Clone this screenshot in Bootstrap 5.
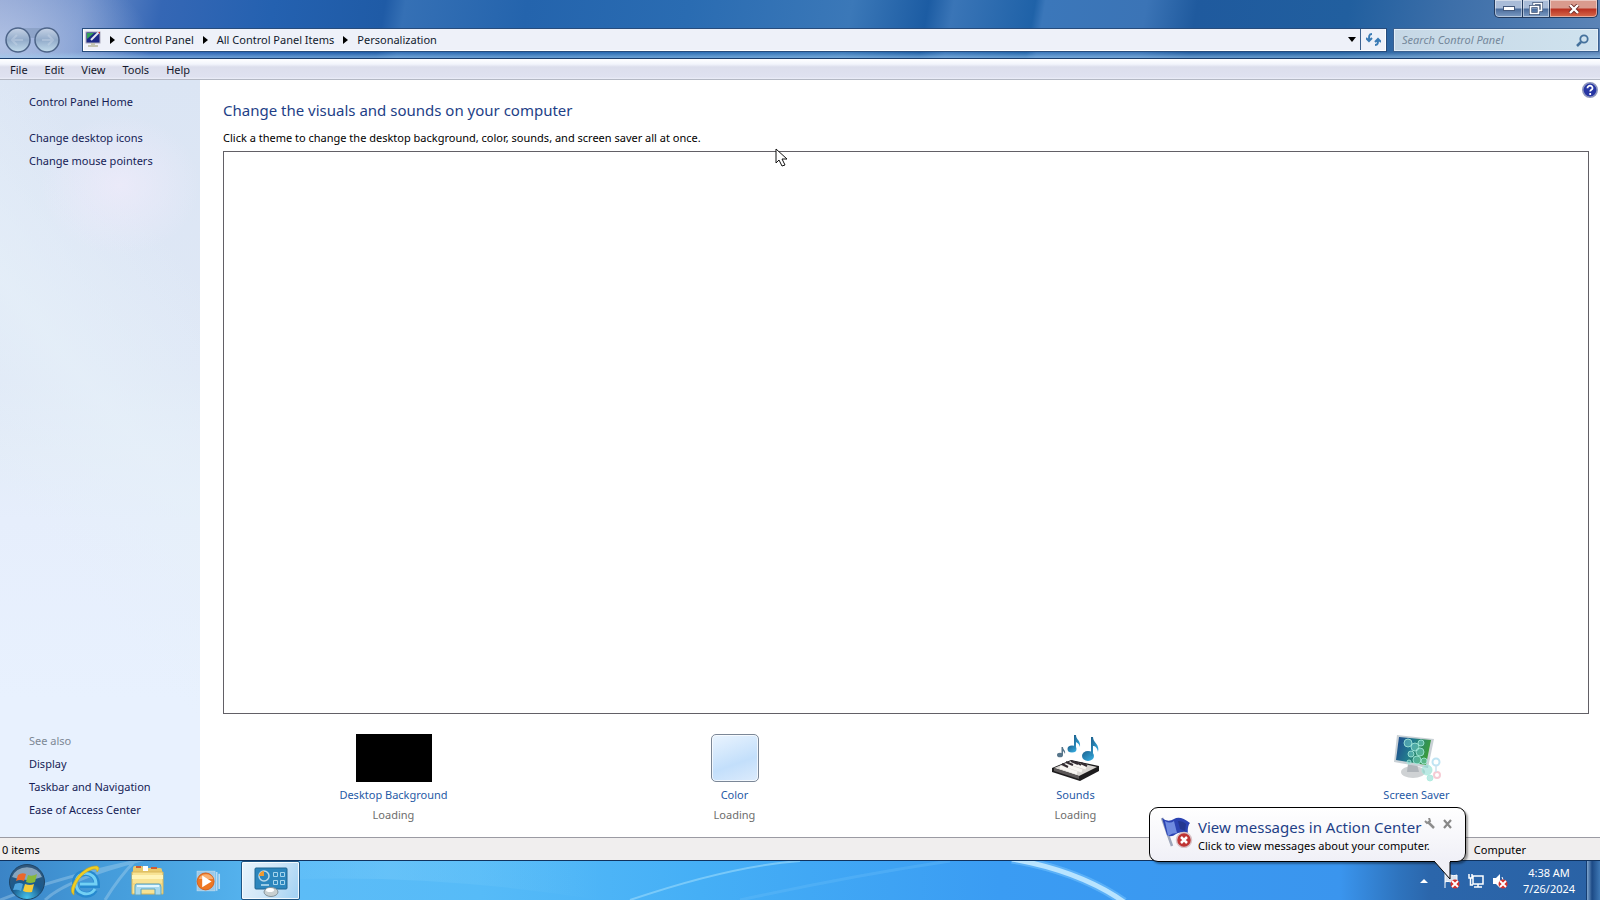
<!DOCTYPE html>
<html lang="en">
<head>
<meta charset="utf-8">
<meta name="viewport" content="width=device-width, initial-scale=1">
<title>Personalization</title>
<link rel="stylesheet" href="https://cdn.jsdelivr.net/npm/bootstrap@5.3.0/dist/css/bootstrap.min.css">
<script src="https://cdn.jsdelivr.net/npm/bootstrap@5.3.0/dist/js/bootstrap.bundle.min.js"></script>
<style>
body{font:11px/16px "Noto Sans","Open Sans",sans-serif;color:#000;background:#fff;overflow:hidden}
a{text-decoration:none}
button{border:0;background:none;padding:0;color:inherit}
svg{display:block;flex:none}
.frame{height:59px;border-bottom:1px solid #1c3f6e;
 background:
 linear-gradient(180deg,rgba(255,255,255,0) 52px,rgba(160,205,240,.5) 57px),
 radial-gradient(ellipse 150px 90px at 0 45px,rgba(190,205,235,.75),rgba(190,205,235,0)),
 linear-gradient(100deg,#8a9fcf 0,#6f8fca 80px,#3567b5 160px,#2461b0 270px,#1f5ba6 380px,#3570b5 400px,#2464ad 520px,#2a6cb2 680px,#3b78b8 840px,#1c5ca3 915px,#3a75b7 940px,#1f62a8 1020px,#3b77ba 1030px,#3b74b6 1130px,#1f5a9e 1180px,#215f9f 1330px,#3d6fa9 1430px,#5f86b8 1600px)}
.capbtns{height:18px;margin-right:2px}
.capbtns button{height:18px;border:1px solid #223a5e;border-top:0;border-left:0;display:flex;align-items:center;justify-content:center;background:linear-gradient(#a9bcd8 0 8px,#4a6c9c 9px,#7d9cc4);box-shadow:inset 0 0 0 1px rgba(255,255,255,.45)}
.capbtns button:first-child{width:29px;border-left:1px solid #223a5e;border-radius:0 0 0 5px}
.capbtns button:nth-child(2){width:27px}
.capbtns .closebtn{width:48px;border-radius:0 0 5px 0;background:linear-gradient(#d99a8d 0 8px,#b93020 9px,#d86a4c)}
.navrow{padding:9px 2px 0 5px}
.addr{height:22px;background:#eef1f9;outline:1px solid #274c7c;border:1px solid #fff;border-top:0;margin-left:22px;padding-left:1px}
.addr a{color:#111a2c}
.addr .crumbs{gap:9px}
.addr .sepbtn{width:25px;height:21px;border-left:1px solid #3c618f;display:flex;align-items:center;justify-content:center}
.searchbox{width:204px;height:22px;background:linear-gradient(90deg,#c6d8e6,#cfe2ee);border:1px solid #e3eef7;outline:1px solid #3a608f;margin-left:8px}
.searchbox input{border:0;background:none;outline:0;font-style:italic;padding:0 0 0 7px;min-width:0;color:#44566c}
.searchbox input::placeholder{color:#75889b;opacity:1}
.menus{height:21px;background:linear-gradient(#fff 0,#f3f5fc 5px,#dcdeec 8px,#dfe1f0 18px,#eceef8);border-bottom:1px solid #b4b8c4;padding:2px 0 0 10px;gap:17px;color:#15182c}
.side{width:200px;padding:10px 0 16px 29px;
 background:
 radial-gradient(ellipse 80px 70px at 120px 105px,rgba(238,235,250,.8),rgba(238,235,250,0)),
 linear-gradient(50deg,rgba(230,241,250,0) 35%,rgba(230,240,249,.7) 56%,rgba(226,236,248,0) 80%),
 linear-gradient(180deg,#dbe5f4 0,#dfe8f6 300px,#e3ecf8 370px,#e6eefc 440px,#e8f1fe 620px,#e8f1fe)}
.side a{color:#151c55;line-height:23px;display:block}
.side .home{margin-bottom:13px}
.also{color:#7d8895;line-height:23px}
.mainpane{padding:19px 11px 14px 23px}
.mainpane h1{font-size:15px;line-height:22px;color:#1e3f87;margin:0 0 9px;font-weight:400}
.themes{border:1px solid #626066;margin-top:5px}
.opts{padding-top:20px;margin-right:2px}
.opts a{color:#1f5aa6;line-height:16px}
.opts .state{color:#6d6d6d;line-height:16px;margin-top:4px}
.opts .pic{height:48px;margin-bottom:5px}
.blackpic{width:76px;height:48px;background:#000}
.colorpic{width:48px;height:48px;border:1px solid #7b8797;border-radius:5px;background:linear-gradient(160deg,#eaf4fe,#c3dffb 60%,#dcebfc);box-shadow:inset 0 0 0 1px rgba(255,255,255,.7)}
.helpbtn{position:absolute;right:2px;top:2px}
.status{height:23px;background:#f0eeee;border-top:1px solid #9b9ba3;padding:2px 0 0 2px}
.status .zone{margin-right:74px}
.tasks{height:40px;border-top:1px solid #10325e;position:relative;
 background:linear-gradient(90deg,#3b84c6 0,#4399d8 90px,#4eaae6 200px,#5cbcf7 300px,#56bbf8 480px,#45aff6 700px,#3a9cf3 1000px,#3a95ee 1340px,#2e73bd 1400px,#2b66ab 1430px,#2a62a5)}
.tasks .swoosh{position:absolute;left:0;top:0}
.tasks button{position:relative}
.pinned{gap:25px}
.activebtn{width:59px;height:39px;border:1px solid #1f5684;border-radius:2px;display:flex;align-items:center;justify-content:center;background:linear-gradient(115deg,#e9f4fc,#cfe6f8 50%,#9fd0f3);box-shadow:inset 0 0 0 1px rgba(255,255,255,.8)}
.clockbtn{color:#fff;line-height:16px;width:74px}
.peek{width:14px;height:39px;border-left:1px solid #163e72;background:linear-gradient(90deg,#7fa6cf,#1c4a86 5px,#3e78b5)}
.balloon{position:absolute;right:134px;bottom:38px;width:317px;height:55px;border:1px solid #000;border-radius:9px;background:linear-gradient(#fff,#f0f0f7);padding:8px 10px 0 10px;z-index:5;box-shadow:2px 2px 2px rgba(0,0,0,.35)}
.balloon .tail{position:absolute;right:10px;top:52px}
.balloon h2{font-size:15px;line-height:22px;color:#1e3f87;margin:0;font-weight:400;white-space:nowrap}
.balloon p{margin:0;line-height:16px;white-space:nowrap}
.balloon .tools{position:absolute;right:13px;top:10px;gap:8px}
.pointer{position:absolute;left:775px;top:148px;z-index:6}
</style>
</head>
<body>
<div class="d-flex flex-column vh-100 position-relative">

<header class="frame flex-shrink-0">
 <div class="capbtns d-flex justify-content-end">
  <button aria-label="Minimize"><svg width="12" height="5"><rect x=".5" y=".5" width="11" height="4" fill="#fff" stroke="#44597c"/></svg></button>
  <button aria-label="Restore"><svg width="14" height="13" fill="none"><path d="M5 3V1.500h7.500v7H10M1.500 4.500h8v7h-8z" stroke="#33496d" stroke-width="3"/><path d="M5 3V1.500h7.500v7H10M1.500 4.500h8v7h-8z" stroke="#fff" stroke-width="1.700"/></svg></button>
  <button class="closebtn" aria-label="Close"><svg width="12" height="10"><path d="M2 1l8 8M10 1L2 9" stroke="#6b2a26" stroke-width="4"/><path d="M2 1l8 8M10 1L2 9" stroke="#fff" stroke-width="2.400"/></svg></button>
 </div>
 <div class="navrow d-flex align-items-center">
  <svg width="56" height="26" viewBox="0 0 56 26"><defs><linearGradient id="nb" x2="0" y2="1"><stop stop-color="#c6d3e6"/><stop offset=".5" stop-color="#92abca"/><stop offset="1" stop-color="#c3dcec"/></linearGradient></defs>
   <path d="M13 1h30v7q-15 6-30 0z" fill="#8197bb" opacity=".6"/><g fill="url(#nb)" stroke="#4d6488" stroke-width="1.500"><circle cx="13" cy="13" r="12"/><circle cx="42" cy="13" r="12"/></g><path d="M18 13H8m4-5l-5 5 5 5M37 13h10m-4-5l5 5-5 5" fill="none" stroke="#d5e0ee" stroke-width="2" opacity=".35"/></svg>
  <nav class="addr d-flex align-items-center flex-grow-1" aria-label="Address">
   <div class="crumbs d-flex align-items-center flex-grow-1">
    <svg width="16" height="17" viewBox="0 0 16 17"><rect x="1" y="1" width="14" height="11" fill="#1c2a86" stroke="#aab"/><path d="M2 2h7l-7 6z" fill="#35a456"/><path d="M6 9l8-8" stroke="#e8e8f4" stroke-width="2"/><path d="M13 1l2 0v2z" fill="#c33"/><path d="M6 12h4v2h3v2H3v-2h3z" fill="#c3c5b2"/></svg>
    <svg width="5" height="8"><path d="M0 0l5 4-5 4z"/></svg><a href="#">Control Panel</a>
    <svg width="5" height="8"><path d="M0 0l5 4-5 4z"/></svg><a href="#">All Control Panel Items</a>
    <svg width="5" height="8"><path d="M0 0l5 4-5 4z"/></svg><a href="#">Personalization</a>
   </div>
   <button class="me-1" aria-label="Previous locations"><svg width="8" height="5"><path d="M0 0h8L4 5z"/></svg></button>
   <button class="sepbtn" aria-label="Refresh"><svg width="15" height="14" viewBox="0 0 15 14" fill="none" stroke="#3a7bb5" stroke-width="2"><path d="M6 1C3 1 3 3 3 7M0 5l3 3 3-3M9 12c3 0 3-2 3-5M9 9l3-3 3 3"/></svg></button>
  </nav>
  <div class="searchbox d-flex align-items-center">
   <input class="flex-grow-1" type="text" placeholder="Search Control Panel" aria-label="Search Control Panel">
   <button class="me-2" aria-label="Search"><svg width="13" height="13" fill="none" stroke="#44719c"><circle cx="8" cy="5" r="3.700" stroke-width="1.800"/><path d="M5 8l-4 4" stroke-width="2.500"/></svg></button>
  </div>
 </div>
</header>

<nav class="menus d-flex align-items-center flex-shrink-0" aria-label="Menu">
 <button>File</button><button>Edit</button><button>View</button><button>Tools</button><button>Help</button>
</nav>

<div class="d-flex flex-grow-1">
 <aside class="side d-flex flex-column flex-shrink-0">
  <a class="home" href="#">Control Panel Home</a>
  <a href="#">Change desktop icons</a>
  <a href="#">Change mouse pointers</a>
  <div class="mt-auto also">See also</div>
  <a href="#">Display</a>
  <a href="#">Taskbar and Navigation</a>
  <a href="#">Ease of Access Center</a>
 </aside>
 <main class="mainpane d-flex flex-column flex-grow-1 position-relative">
  <button class="helpbtn" aria-label="Help"><svg width="16" height="16"><circle cx="8" cy="8" r="7.200" fill="#2736a4" stroke="#8e96bd" stroke-width="1.600"/><path d="M5.500 6.200c0-3.400 5.200-3.200 5 0 0 1.600-2.300 1.600-2.300 3.300M8.200 11v2" fill="none" stroke="#fff" stroke-width="1.800"/></svg></button>
  <h1>Change the visuals and sounds on your computer</h1>
  <div>Click a theme to change the desktop background, color, sounds, and screen saver all at once.</div>
  <div class="themes flex-grow-1"></div>
  <div class="opts row g-0 text-center">
   <div class="col-3 d-flex flex-column align-items-center"><div class="pic blackpic"></div><a href="#">Desktop Background</a><div class="state">Loading</div></div>
   <div class="col-3 d-flex flex-column align-items-center"><div class="pic colorpic"></div><a href="#">Color</a><div class="state">Loading</div></div>
   <div class="col-3 d-flex flex-column align-items-center">
    <svg class="pic" width="48" height="48" viewBox="0 0 48 48"><defs><linearGradient id="nt" x2="1" y2="1"><stop stop-color="#1b5f8c"/><stop offset="1" stop-color="#39b4e8"/></linearGradient></defs>
     <path d="M0 34l19-8 28 6v5L28 47 0 38z" fill="#1d1c1d"/><path d="M2 34l17-7 26 6-18 9z" fill="#d9d6d2"/><path d="M2 34l25 8v3L2 37z" fill="#5c5858"/><path d="M8 33l17 6M13 31l17 6M18 29l16 5" stroke="#f8f6f2" stroke-width="3"/><path d="M14 28l7 3M19 27l7 3M24 28l5 3M29 29l6 3M10 30l6 3" stroke="#332c31" stroke-width="2"/>
     <g fill="url(#nt)"><ellipse cx="20" cy="15" rx="4.500" ry="3.500"/><path d="M22 15V1h2c0 5 5 5 4 12-1-4-3-4-4-5v7z"/><ellipse cx="36" cy="22" rx="6" ry="5"/><path d="M39 22V3h2c0 6 7 7 5 15-1-5-3-6-5-6v10z"/></g><g fill="#56758a"><ellipse cx="8" cy="21" rx="3" ry="2.300"/><path d="M9.500 21v-8H11c0 3 3 3 2 7-1-2-1-2-2-3v4z"/></g></svg>
    <a href="#">Sounds</a><div class="state">Loading</div></div>
   <div class="col-3 d-flex flex-column align-items-center">
    <svg class="pic" width="48" height="48" viewBox="0 0 48 48"><defs><linearGradient id="sc" x2="1" y2=".3"><stop stop-color="#1f478e"/><stop offset=".5" stop-color="#227c8e"/><stop offset="1" stop-color="#3b9c3b"/></linearGradient></defs>
     <ellipse cx="20" cy="38" rx="12" ry="6" fill="#cfd2d4"/><path d="M15 30h9l2 8H14z" fill="#b0b5ba"/><path d="M4 1l37 4-6 29L1 28z" fill="#c9d1d6"/><path d="M6 3l32 3-5 25L3 26z" fill="url(#sc)"/>
     <g fill="#78d4ca" fill-opacity=".5" stroke="#a9ebdc" stroke-opacity=".8"><circle cx="15" cy="9" r="4"/><circle cx="22" cy="13" r="4"/><circle cx="28" cy="9" r="3"/><circle cx="27" cy="18" r="4"/><circle cx="18" cy="20" r="3"/><circle cx="24" cy="26" r="4"/><circle cx="31" cy="27" r="3"/><circle cx="16" cy="28" r="2"/><circle cx="34" cy="36" r="5"/><circle cx="37" cy="44" r="3"/></g><g fill="none"><circle cx="43" cy="28" r="3.500" stroke="#bfe4f3" stroke-width="2"/><circle cx="44" cy="41" r="3" stroke="#f6cbd4" stroke-width="2"/><path d="M43 31v7" stroke="#cbe2ee" stroke-width="1.500"/></g></svg>
    <a href="#">Screen Saver</a></div>
  </div>
 </main>
</div>

<footer class="status d-flex align-items-center justify-content-between flex-shrink-0">
 <span>0 items</span>
 <span class="zone">Computer</span>
</footer>

<div class="tasks d-flex align-items-center flex-shrink-0">
 <svg class="swoosh" width="1300" height="39" fill="none"><defs><linearGradient id="glow"><stop stop-color="#7bcdfa" stop-opacity="0"/><stop offset=".4" stop-color="#7bcdfa" stop-opacity=".35"/><stop offset="1" stop-color="#7bcdfa" stop-opacity="0"/></linearGradient></defs><path d="M45 39Q70 15 170-8M105 39Q120 15 135 0M0 39Q100 0 260-20" stroke="#b9dcf0" stroke-opacity=".35" stroke-width="3"/><path d="M250 20Q420 10 600 39V0H250z" fill="url(#glow)"/><path d="M630 39Q730 5 800 0" stroke="#8fd4fb" stroke-opacity=".7" stroke-width="2"/><path d="M740 39Q850 15 950 0" stroke="#68bdfa" stroke-opacity=".35" stroke-width="3"/><path d="M1012-2Q1080 10 1124 41" stroke="#6fc0fb" stroke-width="9" stroke-opacity=".6"/><path d="M1012-2Q1080 10 1124 41" stroke="#b8e4ff" stroke-width="5"/></svg>
 <div class="pinned d-flex align-items-center ms-2">
 <button aria-label="Start"><svg width="38" height="38" viewBox="0 0 38 38"><defs><radialGradient id="orb" cx=".5" cy=".95" r=".9"><stop stop-color="#47c3ec"/><stop offset=".5" stop-color="#195a8d"/><stop offset="1" stop-color="#31587c"/></radialGradient></defs><circle cx="19" cy="20" r="17.500" fill="url(#orb)" stroke="#1d4568"/><path d="M4 15a15.500 13 0 0 1 30 0q-15 6-30 0z" fill="#d3e4ee" opacity=".55"/><path d="M10 13q4-3 8-1l-2 7q-4-2-8 0z" fill="#ea672b"/><path d="M20 13q4 2 9-1l-2 8q-5 2-9 0z" fill="#87b93b"/><path d="M7 22q5-2 8 0l-2 7q-3-2-8-1z" fill="#50a5de"/><path d="M17 22q5 2 9 0l-2 8q-5 1-9-1z" fill="#f5cc3a"/></svg></button>
 <button aria-label="Internet Explorer"><svg width="32" height="34" viewBox="2 0 32 34"><path d="M26 26c-5 8-20 6-20-7 0-14 22-14 22 2H11" fill="none" stroke="#2689cf" stroke-width="6"/><path d="M26 25c-5 8-19 6-19-6 0-13 20-13 20 1H11" fill="none" stroke="#72d0f4" stroke-width="3"/><path d="M5 31C-4 27 12 1 28 2c3 1 2 4 0 6 0-3-2-4-6-2C12 9 4 22 5 31z" fill="#f0ce23" stroke="#c6a11b" stroke-width=".6"/></svg></button>
 <button aria-label="Windows Explorer"><svg width="40" height="34" viewBox="0 0 40 34"><path d="M5 4q0-2 2-2h7l2 2h16q2 0 2 2v5H5z" fill="#e8c96d"/><path d="M15 2h5v5h-5z" fill="#fff"/><path d="M8 3h5M23 4h6" stroke="#cf5b33" stroke-width="2"/><path d="M4 8h31v22H4z" fill="#f8e394" stroke="#d9b75b"/><path d="M4 13h31" stroke="#fff4b9" stroke-width="4"/><path d="M4 20h31" stroke="#eccb70"/><path d="M8 20h23q2 0 2 3v8h-6v-6H13v6H7v-8q0-3 1-3z" fill="#a7d9ee" stroke="#5ba3c1"/><path d="M9 22h22" stroke="#e2f7ff" stroke-width="2"/></svg></button>
 <button aria-label="Media Player"><svg width="32" height="28" viewBox="-1 -2 36 33"><path d="M26 4v22M29 6v18" stroke="#b9dcf4" stroke-width="2"/><rect x="3" y="3" width="21" height="23" fill="#9cc9e8" stroke="#b9d9ee"/><circle cx="13" cy="15" r="10" fill="#ee7722" stroke="#d45b16"/><path d="M5 12a9 8 0 0 1 17 0z" fill="#f9ae6f"/><path d="M9 8l11 7-11 7z" fill="#fff"/></svg></button>
 </div>
 <button class="activebtn ms-3 me-auto" aria-label="Personalization"><svg width="34" height="32" viewBox="0 0 34 32"><rect x="1" y="3" width="32" height="21" rx="1" fill="#2c86bd" stroke="#1e6491"/><circle cx="10" cy="11" r="5" fill="none" stroke="#b8d9ea" stroke-width="1.500"/><path d="M10 6a5 5 0 0 0-5 5h5z" fill="#ef9a30"/><path d="M7 20h8" stroke="#bce1f3" stroke-width="1.500"/><g fill="none" stroke="#a5d4ec"><path d="M19.500 7.500h4v4h-4zM26.500 7.500h4v4h-4zM19.500 15.500h4v4h-4zM26.500 15.500h4v4h-4z"/></g><ellipse cx="17" cy="27" rx="7" ry="4.500" fill="#c9cfd0" stroke="#84939b"/><ellipse cx="16" cy="25" rx="4" ry="2" fill="#fff"/></svg></button>
 <div class="d-flex align-items-center">
  <button aria-label="Show hidden icons"><svg width="8" height="4"><path d="M0 4l4-4 4 4z" fill="#fff"/></svg></button>
  <button class="ms-3" aria-label="Action Center"><svg width="16" height="16"><path d="M1 0v15M1 2c5-2 6 2 12 0v7c-6 2-7-2-12 0" fill="#dae3ef" stroke="#fff"/><circle cx="11" cy="11" r="4.500" fill="#d4322d"/><path d="M8 8l6 6m0-6l-6 6" stroke="#fff" stroke-width="1.800"/></svg></button>
  <button class="ms-2" aria-label="Network"><svg width="16" height="16" fill="none" stroke="#fff" stroke-width="1.500"><path d="M5 3h10v8H5zM6 14h8M10 11v3M1 1v4h3V1M2.500 5v7H5"/></svg></button>
  <button class="ms-2" aria-label="Volume"><svg width="16" height="16"><path d="M1 5h3l4-4v14l-4-4H1z" fill="#fff"/><path d="M10 4q3 4 0 8" fill="none" stroke="#fff"/><circle cx="11" cy="11" r="4.500" fill="#d4322d"/><path d="M8 8l6 6m0-6l-6 6" stroke="#fff" stroke-width="1.800"/></svg></button>
  <button class="clockbtn ms-1">4:38 AM<br>7/26/2024</button>
  <button class="peek" aria-label="Show desktop"></button>
 </div>
</div>

<div class="balloon d-flex" role="alert">
 <svg width="34" height="32" viewBox="0 0 34 32"><path d="M2 2l10 28" stroke="#9ea6ba" stroke-width="2.500"/><path d="M2 2q6 5 12 1t16 4q-3 3-2 13-7-6-12-2t-9 1z" fill="#2b43b2"/><path d="M5 5q5 3 9 0l3 12q-5 0-9 3z" fill="#6f8be0"/><path d="M18 5q5 0 8 3l-1 7-5-2z" fill="#233791"/><circle cx="24" cy="24" r="7.500" fill="#bf3434" stroke="#d8c3c8" stroke-width="1.500"/><path d="M21 21l6 6m0-6l-6 6" stroke="#fff" stroke-width="2.500"/></svg>
 <div class="ms-1"><h2>View messages in Action Center</h2><p>Click to view messages about your computer.</p></div>
 <div class="tools d-flex"><button aria-label="Options"><svg width="11" height="11"><path d="M4 4l6 6" stroke="#8d8d8d" stroke-width="2.500"/><path d="M1 3l2 2 3-2L5 0" fill="none" stroke="#8d8d8d" stroke-width="2"/></svg></button><button aria-label="Close message"><svg width="9" height="10"><path d="M1 1l7 8M8 1L1 9" stroke="#888" stroke-width="2.200"/></svg></button></div>
 <svg class="tail" width="22" height="22"><path d="M0 0l17 19V0z" fill="#f0f0f7"/><path d="M1 1l16 18V2" fill="none" stroke="#000"/></svg>
</div>

<svg class="pointer" width="13" height="20"><path d="M1 1v14l3-3 3 6 3-1-3-6h5z" fill="#fff" stroke="#111"/></svg>
</div>
</body>
</html>
